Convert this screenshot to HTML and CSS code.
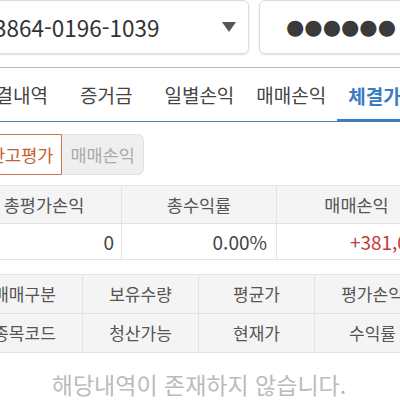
FILE: index.html
```html
<!DOCTYPE html>
<html lang="ko">
<head>
<meta charset="utf-8">
<link rel="stylesheet" href="styles.css">
</head>
<body>
<div class="page">
  <div class="top">
    <div class="select">
      <span class="acct">3864-0196-1039</span>
      <span class="caret"></span>
    </div>
    <div class="pw"><span class="dots">●●●●●●</span></div>
  </div>
  <div class="sep"></div>
  <div class="tabs">
    <div class="tab">체결내역</div>
    <div class="tab wide">증거금</div>
    <div class="tab">일별손익</div>
    <div class="tab">매매손익</div>
    <div class="tab active">체결가능</div>
  </div>
  <div class="seg">
    <div class="segbtn on">잔고평가</div>
    <div class="segbtn off">매매손익</div>
  </div>
  <div class="sum">
    <div class="th">총평가손익</div>
    <div class="th">총수익률</div>
    <div class="th">매매손익</div>
    <div class="td">0</div>
    <div class="td">0.00%</div>
    <div class="td red">+381,000</div>
  </div>
  <div class="list">
    <div class="th">매매구분</div>
    <div class="th">보유수량</div>
    <div class="th">평균가</div>
    <div class="th">평가손익</div>
    <div class="th">종목코드</div>
    <div class="th">청산가능</div>
    <div class="th">현재가</div>
    <div class="th">수익률</div>
  </div>
  <div class="empty">해당내역이 존재하지 않습니다.</div>
</div>
</body>
</html>
```

FILE: styles.css
```css
html, body {
  margin: 0;
  padding: 0;
  background: #fff;
  overflow: hidden;
}
body {
  width: 400px;
  height: 400px;
  font-family: "Noto Sans CJK KR", "Noto Sans", sans-serif;
  color: #444;
}
.page {
  width: 464px;
  margin-left: -33px;
}
.top {
  display: flex;
  gap: 10px;
  padding: 0 8px;
  height: 54px;
}
.select, .pw {
  box-sizing: border-box;
  height: 54px;
  border: 1px solid #dcdcdc;
  border-radius: 6px;
  box-shadow: 0 1px 2px rgba(0,0,0,0.12);
  display: flex;
  align-items: center;
}
.select {
  width: 274px;
  padding: 0 12px 0 18px;
  justify-content: space-between;
}
.acct {
  font-size: 22.5px;
  color: #333;
}
.caret {
  width: 0;
  height: 0;
  border-left: 7px solid transparent;
  border-right: 7px solid transparent;
  border-top: 10px solid #555;
}
.pw {
  flex: 1;
  justify-content: center;
}
.dots {
  font-family: "DejaVu Sans", sans-serif;
  font-size: 21px;
  color: #3a3a3a;
}
.sep {
  margin-top: 13px;
  height: 1px;
  background: #b8b8b8;
}
.tabs {
  display: flex;
  height: 54px;
  border-bottom: 1px solid #4a82c6;
  box-sizing: border-box;
  align-items: stretch;
}
.tab {
  font-size: 19px;
  padding: 0 11px;
  display: flex;
  align-items: center;
  justify-content: center;
  color: #444;
  box-sizing: border-box;
  white-space: nowrap;
}
.tab.wide { min-width: 94.5px; }
.tab.active {
  color: #3b7bc4;
  font-weight: bold;
  border-bottom: 3px solid #3b7bc4;
  margin-bottom: -1px;
  padding-top: 3px;
}
.seg {
  display: flex;
  margin: 12px 0 0 13px;
  height: 41px;
}
.segbtn {
  box-sizing: border-box;
  font-size: 17.5px;
  display: flex;
  align-items: center;
  padding: 0 8px;
}
.segbtn.on {
  border: 1px solid #c9774f;
  color: #c4602f;
  border-radius: 5px 0 0 5px;
}
.segbtn.off {
  background: #efefef;
  border: 1px solid #e2e2e2;
  border-left: none;
  color: #aaa;
  border-radius: 0 6px 6px 0;
}
.sum {
  margin-top: 10px;
  display: grid;
  grid-template-columns: 155px 155px 160px;
  border-top: 1px solid #e4e4e4;
}
.sum .th, .list .th {
  background: #f4f4f4;
  color: #555;
  text-align: center;
  border-right: 1px solid #e2e2e2;
  border-bottom: 1px solid #e2e2e2;
}
.sum .th {
  font-size: 17.5px;
  height: 37px;
  line-height: 37px;
}
.sum .td {
  height: 35px;
  line-height: 35px;
  font-size: 19px;
  text-align: right;
  padding-right: 7px;
  border-right: 1px solid #e4e4e4;
  border-bottom: 1px solid #e4e4e4;
}
.sum .td:nth-child(5) { padding-right: 9px; }
.red {
  color: #c43a3a;
}
.list {
  margin-top: 14px;
  display: grid;
  grid-template-columns: repeat(4, 1fr);
  border-top: 1px solid #e4e4e4;
}
.list .th {
  font-size: 17px;
  height: 38px;
  line-height: 38px;
}
.empty {
  text-align: center;
  font-size: 23px;
  color: #bbb;
  padding-top: 14px;
}
```
